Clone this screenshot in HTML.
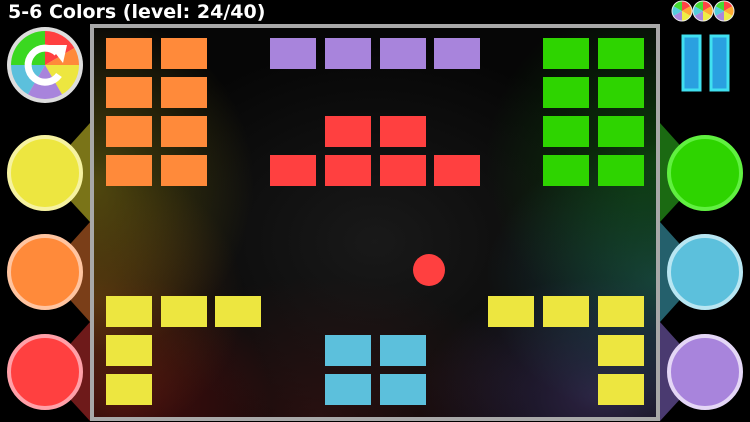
<!DOCTYPE html>
<html><head><style>
*{margin:0;padding:0}
body{width:750px;height:422px;background:#000;position:relative;overflow:hidden;font-family:"Liberation Sans",sans-serif}
.b{position:absolute;width:46px;height:31px}
.o{background:#ff8a3a}.p{background:#a884dc}.r{background:#ff4040}.g{background:#2ed400}.y{background:#ede640}.c{background:#5cc0dc}
.circ{position:absolute;width:68px;height:68px;border-radius:50%;border:4px solid}
#board{position:absolute;left:90px;top:24px;width:562px;height:389px;border:4px solid #a8a8a8;
background:
radial-gradient(ellipse 160px 170px at 0% 40%,rgba(130,120,20,.55),transparent),
radial-gradient(ellipse 150px 140px at 0% 70%,rgba(140,70,20,.5),transparent),
radial-gradient(ellipse 150px 120px at 5% 95%,rgba(130,20,20,.5),transparent),
radial-gradient(ellipse 170px 170px at 100% 35%,rgba(20,110,20,.5),transparent),
radial-gradient(ellipse 170px 140px at 100% 65%,rgba(40,110,120,.5),transparent),
radial-gradient(ellipse 180px 120px at 90% 95%,rgba(90,70,140,.45),transparent),
radial-gradient(ellipse 220px 140px at 40% 100%,rgba(100,30,30,.35),transparent),
radial-gradient(ellipse 260px 200px at 50% 55%,rgba(60,60,60,.35),transparent),
#060606}
</style></head><body>
<div style="position:absolute;left:8px;top:1px;color:#fff;font-weight:bold;font-size:19px;letter-spacing:0px;font-family:'DejaVu Sans',sans-serif">5-6 Colors (level: 24/40)</div>
<svg style="position:absolute;left:0;top:0" width="750" height="422">
<defs><g id="w"><circle r="10.5" fill="#eee"/><path d="M0 0L0-9.5A9.5 9.5 0 0 1 8.2-4.75Z" fill="#f44"/><path d="M0 0L8.2-4.75A9.5 9.5 0 0 1 8.2 4.75Z" fill="#fa3"/><path d="M0 0L8.2 4.75A9.5 9.5 0 0 1 0 9.5Z" fill="#ee4"/><path d="M0 0L0 9.5A9.5 9.5 0 0 1-8.2 4.75Z" fill="#a8d"/><path d="M0 0L-8.2 4.75A9.5 9.5 0 0 1-8.2-4.75Z" fill="#5cd"/><path d="M0 0L-8.2-4.75A9.5 9.5 0 0 1 0-9.5Z" fill="#4d3"/></g></defs>
<polygon points="45,173 90,123 90,222" fill="#7a7418"/>
<polygon points="45,272 90,222 90,322" fill="#7a3e18"/>
<polygon points="45,372 90,322 90,421" fill="#6e1a1a"/>
<polygon points="705,173 660,123 660,222" fill="#1b6a12"/>
<polygon points="705,272 660,222 660,322" fill="#24606c"/>
<polygon points="705,372 660,322 660,421" fill="#4a3a70"/>
<g transform="translate(45,65)">
<circle r="38" fill="#ddd"/>
<path d="M0 0 L0 -34 A34 34 0 0 1 29.4 -17Z" fill="#ff4040"/>
<path d="M0 0 L29.4 -17 A34 34 0 0 1 34 0Z" fill="#ff8a3a"/>
<path d="M0 0 L34 0 A34 34 0 0 1 17 29.4Z" fill="#ede640"/>
<path d="M0 0 L17 29.4 A34 34 0 0 1 -17 29.4Z" fill="#a884dc"/>
<path d="M0 0 L-17 29.4 A34 34 0 0 1 -34 0Z" fill="#5cc0dc"/>
<path d="M0 0 L-34 0 A34 34 0 0 1 0 -34Z" fill="#3ad820"/>
<path d="M12 -12 A17 17 0 1 0 14 10" fill="none" stroke="#fff" stroke-width="7"/>
<polygon points="4,-20 22,-20 18,-2" fill="#fff"/>
</g>
<use href="#w" x="682" y="11"/><use href="#w" x="703" y="11"/><use href="#w" x="724" y="11"/>
<rect x="683" y="36" width="17" height="54" fill="#2aa0e0" stroke="#40e0f0" stroke-width="3"/>
<rect x="711" y="36" width="17" height="54" fill="#2aa0e0" stroke="#40e0f0" stroke-width="3"/>
</svg>
<div class="circ" style="left:7px;top:135px;background:#ede640;border-color:#f6f2a0"></div>
<div class="circ" style="left:7px;top:234px;background:#ff8a3a;border-color:#ffc4a0"></div>
<div class="circ" style="left:7px;top:334px;background:#ff4040;border-color:#ffa0a8"></div>
<div class="circ" style="left:667px;top:135px;background:#2ed400;border-color:#60f040"></div>
<div class="circ" style="left:667px;top:234px;background:#5cc0dc;border-color:#b8e6f2"></div>
<div class="circ" style="left:667px;top:334px;background:#a884dc;border-color:#e4d6f6"></div>
<div id="board"></div>
<div class="b o" style="left:106px;top:38px"></div><div class="b o" style="left:161px;top:38px"></div>
<div class="b o" style="left:106px;top:77px"></div><div class="b o" style="left:161px;top:77px"></div>
<div class="b o" style="left:106px;top:116px"></div><div class="b o" style="left:161px;top:116px"></div>
<div class="b o" style="left:106px;top:155px"></div><div class="b o" style="left:161px;top:155px"></div>
<div class="b p" style="left:270px;top:38px"></div><div class="b p" style="left:325px;top:38px"></div><div class="b p" style="left:380px;top:38px"></div><div class="b p" style="left:434px;top:38px"></div>
<div class="b r" style="left:325px;top:116px"></div><div class="b r" style="left:380px;top:116px"></div>
<div class="b r" style="left:270px;top:155px"></div><div class="b r" style="left:325px;top:155px"></div><div class="b r" style="left:380px;top:155px"></div><div class="b r" style="left:434px;top:155px"></div>
<div class="b g" style="left:543px;top:38px"></div><div class="b g" style="left:598px;top:38px"></div>
<div class="b g" style="left:543px;top:77px"></div><div class="b g" style="left:598px;top:77px"></div>
<div class="b g" style="left:543px;top:116px"></div><div class="b g" style="left:598px;top:116px"></div>
<div class="b g" style="left:543px;top:155px"></div><div class="b g" style="left:598px;top:155px"></div>
<div class="b y" style="left:106px;top:296px"></div><div class="b y" style="left:161px;top:296px"></div><div class="b y" style="left:215px;top:296px"></div>
<div class="b y" style="left:106px;top:335px"></div><div class="b y" style="left:106px;top:374px"></div>
<div class="b c" style="left:325px;top:335px"></div><div class="b c" style="left:380px;top:335px"></div>
<div class="b c" style="left:325px;top:374px"></div><div class="b c" style="left:380px;top:374px"></div>
<div class="b y" style="left:488px;top:296px"></div><div class="b y" style="left:543px;top:296px"></div><div class="b y" style="left:598px;top:296px"></div>
<div class="b y" style="left:598px;top:335px"></div><div class="b y" style="left:598px;top:374px"></div>
<div style="position:absolute;left:413px;top:254px;width:32px;height:32px;border-radius:50%;background:#ff4040"></div>
</body></html>
